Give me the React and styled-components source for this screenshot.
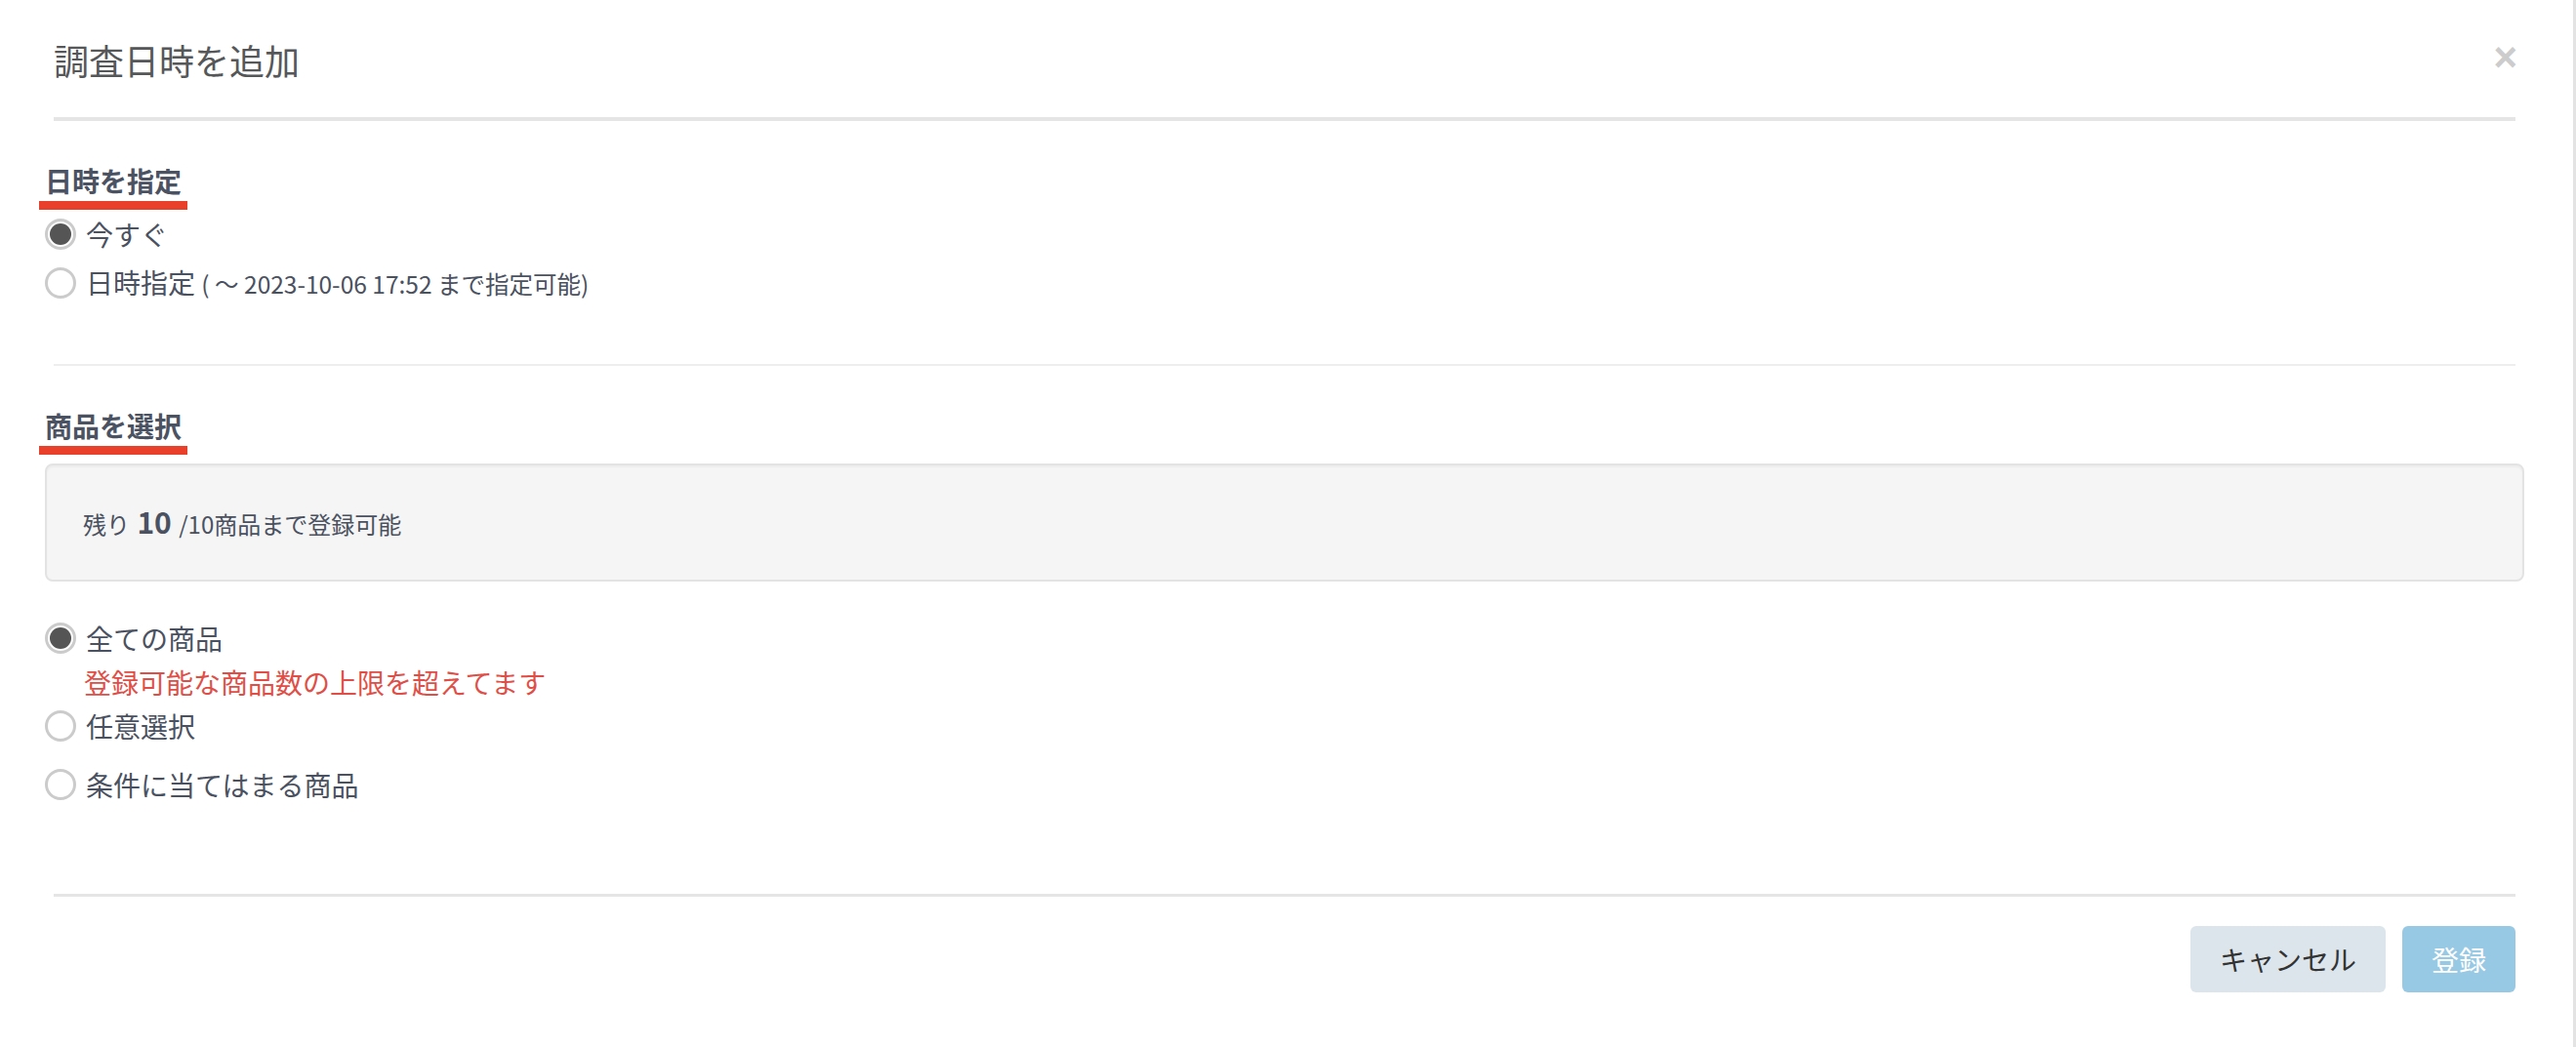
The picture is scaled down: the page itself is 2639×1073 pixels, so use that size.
import React from "react";
import styled, { createGlobalStyle } from "styled-components";

const GlobalStyle = createGlobalStyle`
  html, body {
    margin: 0;
    padding: 0;
    background: #ffffff;
  }
  body {
    font-family: "Noto Sans CJK JP", "Noto Sans", sans-serif;
    color: #4a5160;
  }
  * { box-sizing: border-box; }
`;

const Modal = styled.div`
  min-height: 100vh;
  background: #ffffff;
  border-right: 3px solid #e3e3e3;
  display: flex;
  flex-direction: column;
`;

const Header = styled.div`
  height: 124px;
  margin: 0 59px 0 55px;
  padding-top: 2px;
  border-bottom: 4px solid #e5e5e5;
  display: flex;
  align-items: center;
  justify-content: space-between;
`;

const Title = styled.h4`
  margin: 0;
  font-size: 36px;
  line-height: 44px;
  font-weight: 400;
  color: #555759;
`;

const Close = styled.button`
  border: 0;
  background: transparent;
  padding: 0;
  margin: -4px -2px 0 0;
  font-family: "Liberation Sans", Arial, sans-serif;
  font-size: 42px;
  line-height: 1;
  font-weight: 700;
  color: #cccccc;
  cursor: pointer;
`;

const Body = styled.div`
  padding: 0 50px 0 40px;
  display: flex;
  flex-direction: column;
`;

const Section = styled.section`
  padding-top: 44px;
  display: flex;
  flex-direction: column;
  align-items: flex-start;
`;

const SectionTitle = styled.h5`
  margin: 0;
  padding: 0 6px 4px;
  font-size: 28px;
  line-height: 34px;
  font-weight: 700;
  color: #4b5262;
  border-bottom: 9px solid #e8402a;
`;

const Row = styled.label`
  height: 50px;
  margin-left: 6px;
  margin-top: ${(p) => (p.$gapTop ? "10px" : "0")};
  display: flex;
  align-items: center;
  gap: 10px;
  font-size: 28px;
  line-height: 40px;
  color: #4a5160;
  cursor: pointer;
`;

const Circle = styled.span`
  flex: none;
  width: 32px;
  height: 32px;
  border-radius: 50%;
  border: 3px solid #cbcbcb;
  background: #ffffff;
  display: flex;
  align-items: center;
  justify-content: center;

  &::after {
    content: "";
    width: 22px;
    height: 22px;
    border-radius: 50%;
    background: ${(p) => (p.$checked ? "#555555" : "transparent")};
  }
`;

const Note = styled.span`
  font-size: 24.5px;
`;

const Divider = styled.hr`
  margin: 58px 9px 0 15px;
  border: 0;
  border-top: 2px solid #eeeeee;
  height: 0;
  align-self: stretch;
`;

const Well = styled.div`
  margin: 9px 0 0 6px;
  align-self: stretch;
  padding: 38px 37px;
  background: #f5f5f5;
  border: 2px solid #e3e3e3;
  border-radius: 8px;
  box-shadow: inset 0 2px 2px rgba(0, 0, 0, 0.04);
  font-size: 24px;
  line-height: 39px;
  color: #4a5160;
`;

const Count = styled.strong`
  font-size: 30px;
  font-weight: 700;
  margin: 0 2px;
`;

const Options = styled.div`
  margin-top: 33px;
  display: flex;
  flex-direction: column;
`;

const ErrorText = styled.div`
  margin-left: 46px;
  font-size: 28px;
  line-height: 40px;
  color: #df4f47;
`;

const Footer = styled.div`
  margin: 87px 59px 0 55px;
  padding-top: 30px;
  border-top: 3px solid #e5e5e5;
  display: flex;
  justify-content: flex-end;
  gap: 17px;
`;

const Button = styled.button`
  height: 68px;
  padding: 0 30px;
  border: 0;
  border-radius: 6px;
  font-family: "Noto Sans CJK JP", sans-serif;
  font-size: 28px;
  line-height: 40px;
  background: ${(p) => (p.$primary ? "#97c9e5" : "#dce5ec")};
  color: ${(p) => (p.$primary ? "#ffffff" : "#333333")};
  min-width: ${(p) => (p.$primary ? "116px" : "199px")};
  cursor: pointer;
`;

function Radio({ checked, children, gapTop }) {
  return (
    <Row $gapTop={gapTop}>
      <Circle $checked={checked} />
      <span>{children}</span>
    </Row>
  );
}

export default function App() {
  return (
    <>
      <GlobalStyle />
      <Modal>
        <Header>
          <Title>調査日時を追加</Title>
          <Close aria-label="閉じる">×</Close>
        </Header>
        <Body>
          <Section>
            <SectionTitle>日時を指定</SectionTitle>
            <Radio checked>今すぐ</Radio>
            <Radio>
              日時指定 <Note>( ～ 2023-10-06 17:52 まで指定可能)</Note>
            </Radio>
          </Section>
          <Divider />
          <Section>
            <SectionTitle>商品を選択</SectionTitle>
            <Well>
              残り <Count>10</Count> /10商品まで登録可能
            </Well>
            <Options>
              <Radio checked>全ての商品</Radio>
              <ErrorText>登録可能な商品数の上限を超えてます</ErrorText>
              <Radio>任意選択</Radio>
              <Radio gapTop>条件に当てはまる商品</Radio>
            </Options>
          </Section>
        </Body>
        <Footer>
          <Button>キャンセル</Button>
          <Button $primary>登録</Button>
        </Footer>
      </Modal>
    </>
  );
}
